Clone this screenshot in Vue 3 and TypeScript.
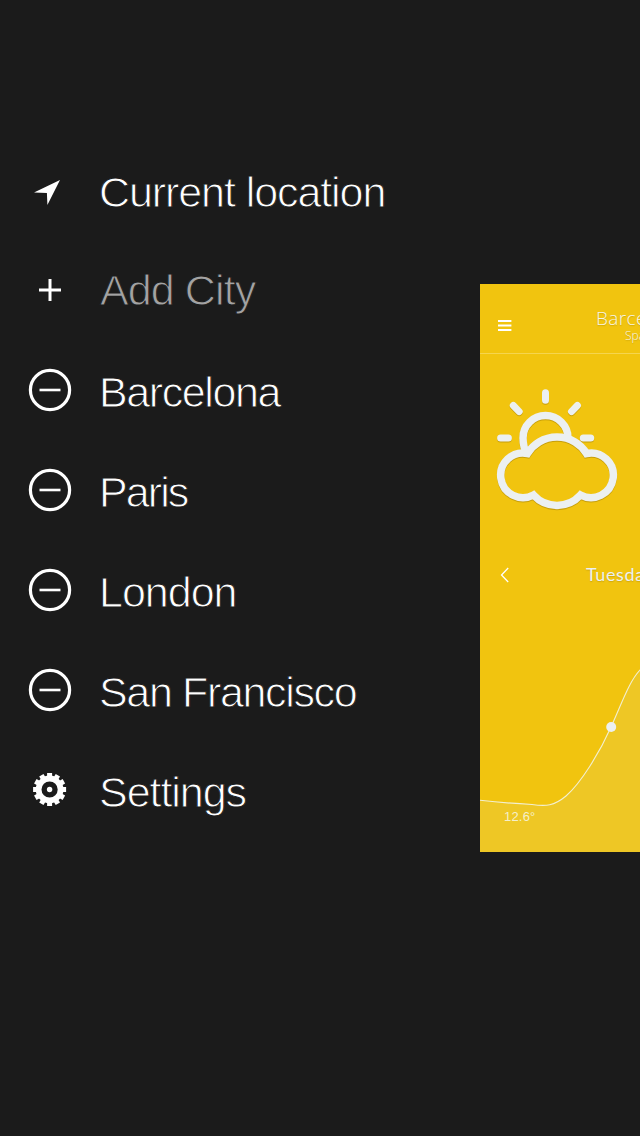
<script setup lang="ts">
type IconKind = 'arrow' | 'plus' | 'minus' | 'gear'

interface MenuItem {
  label: string
  icon: IconKind
  spacing: number
  muted?: boolean
}

const items: MenuItem[] = [
  { label: 'Current location', icon: 'arrow', spacing: -1.08 },
  { label: 'Add City', icon: 'plus', spacing: -0.9, muted: true },
  { label: 'Barcelona', icon: 'minus', spacing: -1.4 },
  { label: 'Paris', icon: 'minus', spacing: -1.9 },
  { label: 'London', icon: 'minus', spacing: -1 },
  { label: 'San Francisco', icon: 'minus', spacing: -1.35 },
  { label: 'Settings', icon: 'gear', spacing: -1.05 },
]

const teeth: number[] = Array.from({ length: 12 }, (_, i) => i * 30)
</script>

<template>
  <main class="screen">
    <nav class="menu">
      <div v-for="item in items" :key="item.label" class="row" :class="{ muted: item.muted }">
        <svg class="icon" viewBox="0 0 50 50" width="50" height="50">
          <path v-if="item.icon === 'arrow'" d="M35 15 L22.4 40 L21.9 27.9 L9 27.4 Z" fill="#fff" />
          <path v-else-if="item.icon === 'plus'" d="M14 25H36M25 14V36" stroke="#fff" stroke-width="3" />
          <g v-else-if="item.icon === 'minus'" fill="none" stroke="#fff">
            <circle cx="25" cy="25" r="19.6" stroke-width="3.2" />
            <path d="M14.5 25H35.5" stroke-width="2.6" />
          </g>
          <g v-else fill="#fff">
            <rect v-for="a in teeth" :key="a" x="22.1" y="8" width="5" height="7" :transform="`rotate(${a} 24.6 24.5)`" />
            <circle cx="24.6" cy="24.5" r="11" fill="none" stroke="#fff" stroke-width="5.8" />
            <circle cx="24.6" cy="24.5" r="2.7" />
          </g>
        </svg>
        <span class="label" :style="{ letterSpacing: item.spacing + 'px' }">{{ item.label }}</span>
      </div>
    </nav>

    <section class="card">
      <header class="bar">
        <svg class="burger" width="15" height="12" viewBox="0 0 15 12">
          <path d="M0 1H13.4M0 5.5H13.4M0 10H13.4" stroke="#fff" stroke-width="2.2" />
        </svg>
        <div class="place">
          <div class="city">Barcelona</div>
          <div class="country">Spain</div>
        </div>
      </header>

      <svg class="weather" width="160" height="140" viewBox="0 0 160 140">
        <g fill="none" stroke="#ecf0f1" stroke-width="7.5">
          <path d="M47.5 74 Q43 68 43 58 A22.5 22.5 0 0 1 88 58" />
          <path d="M47.5 73.5 A34.7 34.7 0 0 1 106.5 73.5 A22.3 22.3 0 1 1 100.5 115 A31.7 31.7 0 0 1 53.5 115 A22.3 22.3 0 1 1 47.5 73.5 Z" />
          <path d="M65.5 12.8V20.2M33.3 25.5L39.2 31.6M97.4 25.5L91.5 31.6M20.6 58H28.4M103.3 58H110.7" stroke-width="7" stroke-linecap="round" />
        </g>
      </svg>

      <div class="day">
        <svg width="10" height="16" viewBox="0 0 10 16">
          <path d="M8.2 1 L1.5 8 L8.2 15" fill="none" stroke="#fff" stroke-width="1.3" />
        </svg>
        <span>Tuesday</span>
      </div>

      <div class="chart">
        <svg width="160" height="202" viewBox="0 0 160 202">
          <path d="M0 150.3 C20 152.5 37 153.7 52 154.5 C66 156.5 74 156 86 146 C101 133 120 102 131 77 C142 53 149 31 161 19 V202 H0 Z" fill="#eec725" />
          <path d="M0 150.3 C20 152.5 37 153.7 52 154.5 C66 156.5 74 156 86 146 C101 133 120 102 131 77 C142 53 149 31 161 19" fill="none" stroke="#f2efd0" stroke-width="1.1" />
          <circle cx="131.2" cy="77" r="5" fill="#ecf0f1" />
        </svg>
        <span class="temp">12.6°</span>
      </div>
    </section>
  </main>
</template>

<style>
body {
  background: #1b1b1b;
}
</style>

<style scoped>
.screen {
  width: 640px;
  height: 1136px;
  display: flex;
  background: #1b1b1b;
  overflow: hidden;
  font-family: "Liberation Sans", Arial, sans-serif;
}
.menu {
  width: 480px;
  padding-top: 140px;
  box-sizing: border-box;
}
.row {
  height: 100px;
  display: flex;
  align-items: center;
  padding-left: 25px;
}
.icon {
  flex: none;
}
.label {
  margin-left: 24px;
  padding-top: 4px;
  font-size: 43px;
  line-height: 50px;
  color: #fff;
  white-space: nowrap;
  -webkit-text-stroke: 0.95px #1b1b1b;
}
.muted .label {
  margin-left: 25px;
  color: #a3a3a3;
  padding-top: 0;
}
.card {
  width: 160px;
  height: 568px;
  margin-top: 284px;
  background: #f1c40f;
  color: #ecf0f1;
  overflow: hidden;
  display: flex;
  flex-direction: column;
}
.bar {
  height: 70px;
  flex: none;
  box-sizing: border-box;
  border-bottom: 1px solid #f5d54e;
  display: flex;
  align-items: flex-start;
}
.burger {
  flex: none;
  margin: 36px 0 0 18px;
}
.place {
  margin: 22px 0 0 82px;
  font-family: "Open Sans", sans-serif;
  font-weight: 300;
  color: #f7f5e6;
  text-shadow: 0 1px 1px rgba(120, 90, 0, 0.25);
}
.city {
  padding-left: 1px;
  font-size: 19px;
  line-height: 24px;
  letter-spacing: 0.4px;
}
.country {
  padding-left: 30px;
  font-size: 12px;
  line-height: 12px;
}
.weather {
  flex: none;
  margin-top: 26px;
  filter: drop-shadow(0 1px 0.5px rgba(120, 90, 0, 0.35));
}
.day {
  height: 30px;
  flex: none;
  margin-top: 40px;
  display: flex;
  align-items: center;
  padding-left: 20px;
  font-family: Lato, sans-serif;
  font-size: 18px;
  letter-spacing: 0.6px;
  text-shadow: 0 1px 1px rgba(120, 90, 0, 0.25);
}
.day span {
  margin-left: 76px;
  padding-bottom: 2px;
}
.day svg {
  flex: none;
}
.chart {
  position: relative;
  margin-top: auto;
  height: 202px;
  flex: none;
}
.chart svg {
  display: block;
}
.temp {
  position: absolute;
  left: 24px;
  top: 159px;
  font-size: 13px;
  line-height: 15px;
  letter-spacing: 0.2px;
  color: #f4efcb;
}
</style>
